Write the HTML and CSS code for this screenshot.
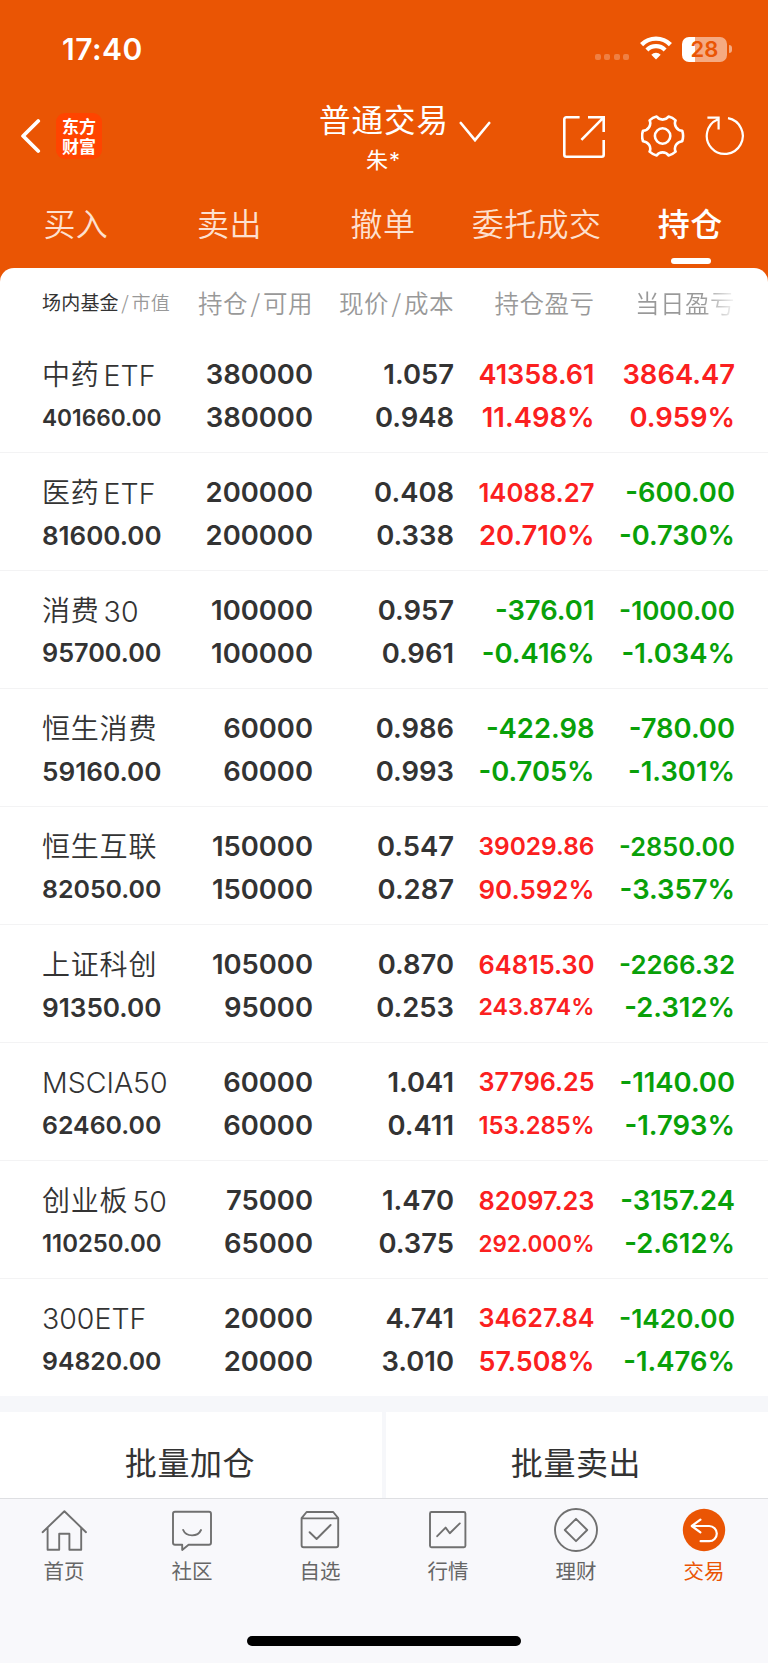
FILE: index.html
```html
<!DOCTYPE html>
<html lang="zh-CN">
<head>
  <meta charset="UTF-8" />
  <meta name="viewport" content="width=device-width, initial-scale=1.0"/>
  <title>普通交易 - 持仓</title>
  <link rel="stylesheet" href="styles.css">
</head>
<body>

  <header>
    <div class="status">
      <span class="time">17:40</span>
      <div class="dots"><i></i><i></i><i></i><i></i></div>
      <svg class="wifi" width="32" height="24" viewBox="0 0 32 24" fill="none" stroke="#fff">
        <path d="M1.6 8.6a20.4 20.4 0 0 1 28.8 0" stroke-width="4.4"/>
        <path d="M6.9 13.9a12.9 12.9 0 0 1 18.2 0" stroke-width="4.2"/>
        <path d="M16 23.4l-4.7-4.7a6.6 6.6 0 0 1 9.4 0z" fill="#fff" stroke="none"/>
      </svg>
      <div class="battery"><span>28</span></div>
      <i class="nub"></i>
    </div>

    <div class="nav">
      <div class="nav-left">
        <svg width="20" height="36" viewBox="0 0 20 36" fill="none" stroke="#fff" stroke-width="3.8" stroke-linecap="round" stroke-linejoin="round">
          <path d="M17.2 3L2.1 18l15.1 15"/>
        </svg>
        <div class="logo">东方<br>财富</div>
      </div>
      <div class="title">
        <div class="title-main">普通交易</div>
        <div class="title-sub">朱*</div>
      </div>
      <svg class="chevron" width="32" height="22" viewBox="0 0 32 22" fill="none" stroke="#fff" stroke-width="2.6" stroke-linecap="round">
        <path d="M1.8 2L16 19.2 30.2 2"/>
      </svg>
      <svg class="share" width="42" height="42" viewBox="0 0 42 42" fill="none" stroke="#fff" stroke-width="2.6">
        <path d="M16.6 1.3H3.3a2 2 0 0 0-2 2v35.4a2 2 0 0 0 2 2h35.4a2 2 0 0 0 2-2V24M25 1.3h15.7V16M40.4 1.6L18.4 23.8"/>
      </svg>
      <svg class="gear" width="44" height="44" viewBox="0 0 44 44" fill="none" stroke="#fff" stroke-width="2.6" stroke-linejoin="round">
        <path d="M15.6 1.6C18.5 5.6 24.7 5.6 27.6 1.6Q31.5 2.5 34.6 5.4C32.4 10 36 15.4 41.2 15.8Q43 21 41.2 26.2C36 26.6 32.4 32 34.6 36.6Q31.5 39.5 27.6 40.4C24.7 36.4 18.5 36.4 15.6 40.4Q11.7 39.5 8.6 36.6C10.8 32 7.2 26.6 2 26.2Q.2 21 2 15.8C7.2 15.4 10.8 10 8.6 5.4Q11.7 2.5 15.6 1.6Z"/>
        <circle cx="21.6" cy="21" r="7.7"/>
      </svg>
      <svg class="refresh" width="40" height="42" viewBox="0 0 40 42" fill="none" stroke="#fff" stroke-width="2.2">
        <path d="M24 3.2A18 18 0 1 1 13.6 4.4M3.4 2.6H14.6V14.4"/>
      </svg>
    </div>

    <div class="tabs">
      <span>买入</span>
      <span>卖出</span>
      <span>撤单</span>
      <span>委托成交</span>
      <span class="active">持仓</span>
    </div>
  </header>

  <main>
    <div class="row head">
      <div class="first"><b>场内基金</b><em>/</em>市值</div>
      <div>持仓<em>/</em>可用</div>
      <div>现价<em>/</em>成本</div>
      <div>持仓盈亏</div>
      <div class="fade">当日盈亏</div>
    </div>
    <div id="list"></div>
  </main>

  <div class="actions">
    <div>批量加仓</div>
    <div>批量卖出</div>
  </div>

  <footer>
    <div class="item">
      <svg width="48" height="48" viewBox="0 0 48 48">
        <path d="M2.6 26.2L24.4 5.2 46 26.2M7.6 22v21.8h11.6V27.8h10.2v16h11.8V22"/>
      </svg>
      首页
    </div>
    <div class="item">
      <svg width="48" height="48" viewBox="0 0 48 48">
        <path d="M7 5.8h34a2 2 0 0 1 2 2v29a2 2 0 0 1-2 2H20.6L14.2 44v-5.2H7a2 2 0 0 1-2-2v-29a2 2 0 0 1 2-2zM15.2 24c3 7.2 14.6 7.2 17.8 0"/>
      </svg>
      社区
    </div>
    <div class="item">
      <svg width="48" height="48" viewBox="0 0 48 48">
        <path d="M5.6 12.2l5-6.2h26.6l5 6.2v27a2 2 0 0 1-2 2H7.6a2 2 0 0 1-2-2zM5.6 12.4h36.6M13.6 26.2l7 6.8 14-14"/>
      </svg>
      自选
    </div>
    <div class="item">
      <svg width="48" height="48" viewBox="0 0 48 48">
        <rect x="6" y="6" width="35.4" height="35.2" rx="1.5"/>
        <path d="M13.2 30.2l8.4-8.6 4.2 5.6 10-9.8"/>
      </svg>
      行情
    </div>
    <div class="item">
      <svg width="48" height="48" viewBox="0 0 48 48">
        <circle cx="24" cy="24" r="21"/>
        <path d="M24 12.8L35.2 24 24 35.2 12.8 24z"/>
      </svg>
      理财
    </div>
    <div class="item on">
      <svg width="48" height="48" viewBox="0 0 48 48">
        <circle cx="24" cy="24" r="21.2"/>
        <path d="M20.4 13.6L11.8 20l8.6 6.4M12 20h17.2a7.6 7.6 0 0 1 0 15.2h-8.6"/>
      </svg>
      交易
    </div>
  </footer>
  <div class="home"><i></i></div>

  <script>
    // name, market value, held, available, price, cost, profit, profit %, day profit, day %
    const rows = [
      ['中药 ETF', '401660.00', '380000', '380000', '1.057', '0.948', '41358.61', '11.498%', '3864.47', '0.959%'],
      ['医药 ETF', '81600.00', '200000', '200000', '0.408', '0.338', '14088.27', '20.710%', '-600.00', '-0.730%'],
      ['消费 30', '95700.00', '100000', '100000', '0.957', '0.961', '-376.01', '-0.416%', '-1000.00', '-1.034%'],
      ['恒生消费', '59160.00', '60000', '60000', '0.986', '0.993', '-422.98', '-0.705%', '-780.00', '-1.301%'],
      ['恒生互联', '82050.00', '150000', '150000', '0.547', '0.287', '39029.86', '90.592%', '-2850.00', '-3.357%'],
      ['上证科创', '91350.00', '105000', '95000', '0.870', '0.253', '64815.30', '243.874%', '-2266.32', '-2.312%'],
      ['MSCIA50', '62460.00', '60000', '60000', '1.041', '0.411', '37796.25', '153.285%', '-1140.00', '-1.793%'],
      ['创业板 50', '110250.00', '75000', '65000', '1.470', '0.375', '82097.23', '292.000%', '-3157.24', '-2.612%'],
      ['300ETF', '94820.00', '20000', '20000', '4.741', '3.010', '34627.84', '57.508%', '-1420.00', '-1.476%']
    ];

    const list = document.getElementById("list");

    rows.forEach(r => {
      const row = document.createElement("div");
      row.className = "row";
      for (let i = 0; i < 10; i += 2) {
        const color = i < 6 ? "" : (r[i].startsWith("-") ? "down" : "up");
        const top = r[i].replace(/([\u4e00-\u9fff]+) ?/, '<span class="zh">$1</span>');
        row.innerHTML += `<div class="cell ${color}">
          <p><span class="${i ? "num" : "name"}">${top}</span></p>
          <p><span class="num">${r[i + 1]}</span></p>
        </div>`;
      }
      list.appendChild(row);
    });

    // shrink numbers that are wider than their column
    document.querySelectorAll(".num").forEach(el => {
      const max = el.closest(".cell").matches(":first-child") ? 119.5 : 116;
      const w = el.getBoundingClientRect().width;
      if (w > max) {
        el.style.fontSize = 27.4 * max / w + "px";
      }
    });
  </script>

</body>
</html>
```
FILE: styles.css
```css
* {
  box-sizing: border-box;
}

body {
  font-family: Inter, "Noto Sans CJK SC", sans-serif;
  background: #f8f8fb;
  color: #333;
  margin: 0;
  width: 768px;
  height: 1663px;
  overflow: hidden;
}

i, em {
  font-style: normal;
}

svg {
  display: block;
  flex: none;
}

header {
  background: #ea5504;
  color: #fff;
  height: 288px;
}

.status {
  height: 98px;
  padding-left: 62px;
  display: flex;
  align-items: center;
}

.time {
  font-size: 30px;
  font-weight: 600;
  letter-spacing: 0.5px;
  width: 533px;
}

.dots {
  display: flex;
  gap: 3.3px;
  width: 45px;
  padding-top: 16px;
}

.dots i {
  width: 6px;
  height: 6px;
  border-radius: 2px;
  background: rgba(255,255,255,0.25);
}

.wifi {
  margin-top: -2px;
}

.battery {
  width: 45px;
  height: 25px;
  margin-left: 10px;
  border-radius: 7px;
  background: linear-gradient(90deg, #fff 13px, #f5aa82 13px);
  color: #ea5504;
  font-size: 22px;
  font-weight: 600;
  line-height: 25px;
  text-align: center;
}

.nub {
  width: 3px;
  height: 8px;
  margin-left: 2px;
  border-radius: 0 3px 3px 0;
  background: #f5aa82;
}

.nav {
  height: 90px;
  display: flex;
}

.nav-left {
  width: 319px;
  padding: 15px 0 0 21px;
  display: flex;
  align-items: flex-start;
}

.nav-left svg {
  margin-top: 5px;
}

.logo {
  width: 46px;
  height: 46px;
  margin-left: 15px;
  padding-top: 3px;
  border-radius: 9px;
  background: #ff4400;
  font-family: "Noto Sans CJK SC", sans-serif;
  font-size: 17px;
  font-weight: 700;
  line-height: 19.5px;
  text-align: center;
}

.title {
  width: 129px;
  text-align: center;
  white-space: nowrap;
}

.title-main {
  font-family: "Noto Sans CJK SC", sans-serif;
  font-size: 31.5px;
  letter-spacing: 1px;
  height: 43px;
  line-height: 41px;
}

.title-sub {
  font-size: 22px;
  letter-spacing: 1px;
  line-height: 38px;
}

.chevron {
  margin: 23px 0 0 11px;
}

.share {
  margin: 18px 0 0 72px;
}

.gear {
  margin: 17px 0 0 36px;
}

.refresh {
  margin: 17px 0 0 19px;
}

.tabs {
  display: flex;
  font-family: "Noto Sans CJK SC", sans-serif;
  font-size: 32px;
  font-weight: 350;
  letter-spacing: 0.4px;
  line-height: 69px;
  text-align: center;
}

.tabs span {
  flex: 1;
  color: #fde0d0;
  white-space: nowrap;
  margin-left: -1px;
  margin-right: 1px;
}

.tabs .active {
  color: #fff;
  font-weight: 500;
  position: relative;
}

.tabs .active::after {
  content: "";
  position: absolute;
  left: 58px;
  top: 70px;
  width: 40px;
  height: 6px;
  border-radius: 3px;
  background: #fff;
}

main {
  position: relative;
  height: 1128px;
  margin-top: -20px;
  background: #fff;
  border-radius: 14px 14px 0 0;
}

.row {
  height: 118px;
  padding: 17px 33px 0 42px;
  display: grid;
  grid-template-columns: 130px 141px 141px 140.5px 140.5px;
  border-bottom: 1px solid #f3f3f4;
}

.row:last-child {
  border: none;
}

.row > div {
  text-align: right;
  white-space: nowrap;
}

.row > div:first-child {
  text-align: left;
}

.head {
  height: 67px;
  padding-top: 13px;
  border: none;
  color: #999;
  font-family: "Noto Sans CJK SC", sans-serif;
  font-size: 24.5px;
  font-weight: 350;
  letter-spacing: 0.5px;
  line-height: 44px;
}

.head .first {
  font-size: 19px;
  letter-spacing: 0.2px;
  line-height: 41px;
}

.head b {
  color: #333;
  font-weight: 400;
}

.head em {
  margin: 0 2.5px;
}

.head .fade {
  background: linear-gradient(90deg, #999 108px, #fff 143px);
  -webkit-background-clip: text;
  background-clip: text;
  color: transparent;
}

.cell p {
  margin: 0;
  height: 43px;
  line-height: 43px;
}

.cell p:first-child {
  margin-top: 1px;
}

.num {
  display: inline-block;
  font-size: 27.4px;
  font-weight: 600;
}

.name {
  font-size: 28.5px;
  font-weight: 350;
}

.name .zh {
  font-family: "Noto Sans CJK SC", sans-serif;
  font-size: 28px;
  letter-spacing: 0.8px;
  margin-right: 4px;
  position: relative;
  top: -1px;
}

.up {
  color: #fb2020;
}

.down {
  color: #09a009;
}

.actions {
  height: 102px;
  padding-top: 16px;
  display: flex;
  gap: 4px;
  background: #f6f7fa;
}

.actions div {
  flex: 1;
  background: #fff;
  font-family: "Noto Sans CJK SC", sans-serif;
  font-size: 32px;
  letter-spacing: 0.6px;
  line-height: 98px;
  height: 86px;
  padding-right: 2px;
  text-align: center;
}

footer {
  position: relative;
  height: 128px;
  display: flex;
  border-top: 1px solid #dedfe2;
  background: #f8f8fb;
}

.item {
  flex: 1;
  padding-top: 7px;
  color: #666;
  font-family: "Noto Sans CJK SC", sans-serif;
  font-size: 20.5px;
  line-height: 32px;
  text-align: center;
}

.item svg {
  margin: 0 auto;
  fill: none;
  stroke: #707070;
  stroke-width: 1.9;
  stroke-linecap: round;
  stroke-linejoin: round;
}

.item.on {
  color: #ea5504;
}

.item.on circle {
  fill: #ea5504;
  stroke: none;
}

.item.on svg {
  stroke: #fff;
  stroke-width: 2.2;
}

.home {
  padding-top: 10px;
}

.home i {
  display: block;
  width: 274px;
  height: 10px;
  margin: 0 auto;
  border-radius: 5px;
  background: #000;
}
```
